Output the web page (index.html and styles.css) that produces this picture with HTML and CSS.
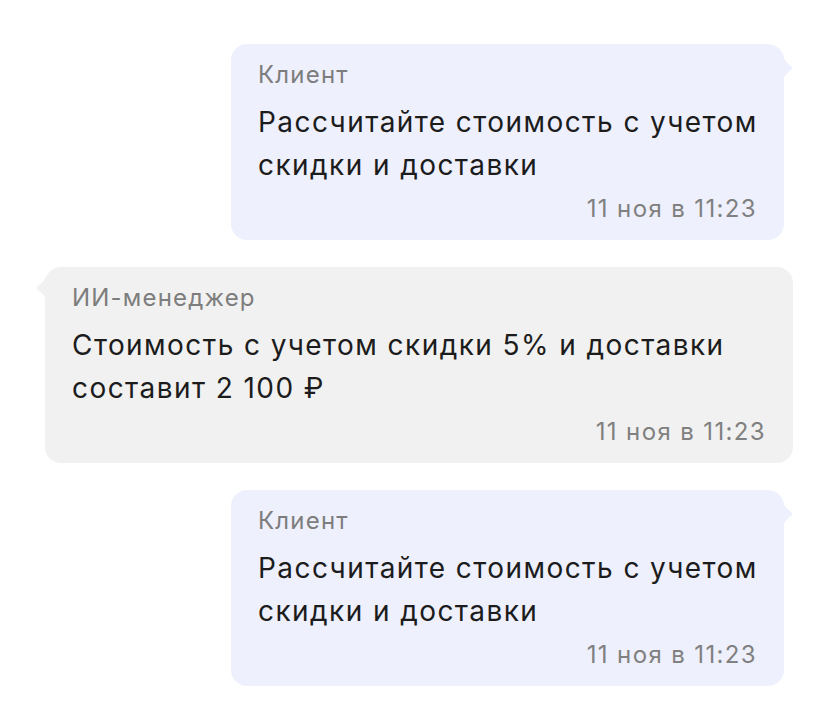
FILE: index.html
```html
<!DOCTYPE html>
<html lang="ru">
<head>
<meta charset="utf-8">
<link rel="stylesheet" href="styles.css">
</head>
<body>
<div class="chat">
  <div class="msg out">
    <div class="bubble">
      <svg class="tail" width="10" height="26" viewBox="0 0 10 26"><path d="M0 0 C1 5 4 8 8.5 11.5 Q10 13 8.5 14.5 C4 18 1 21 0 26 Z"/></svg>
      <div class="author">Клиент</div>
      <div class="text">Рассчитайте стоимость с учетом скидки и доставки</div>
      <div class="time">11 ноя в 11:23</div>
    </div>
  </div>
  <div class="msg in">
    <div class="bubble">
      <svg class="tail" width="10" height="26" viewBox="0 0 10 26"><path d="M10 0 C9 5 6 8 1.5 11.5 Q0 13 1.5 14.5 C6 18 9 21 10 26 Z"/></svg>
      <div class="author">ИИ-менеджер</div>
      <div class="text">Стоимость с учетом скидки 5% и доставки составит 2 100 ₽</div>
      <div class="time">11 ноя в 11:23</div>
    </div>
  </div>
  <div class="msg out">
    <div class="bubble">
      <svg class="tail" width="10" height="26" viewBox="0 0 10 26"><path d="M0 0 C1 5 4 8 8.5 11.5 Q10 13 8.5 14.5 C4 18 1 21 0 26 Z"/></svg>
      <div class="author">Клиент</div>
      <div class="text">Рассчитайте стоимость с учетом скидки и доставки</div>
      <div class="time">11 ноя в 11:23</div>
    </div>
  </div>
</div>
</body>
</html>
```

FILE: styles.css
```css
html, body {
  margin: 0;
  padding: 0;
  background: #ffffff;
}
body {
  font-family: Inter, "Noto Sans", sans-serif;
  color: #1c1c1c;
}
.chat {
  display: flex;
  flex-direction: column;
  gap: 27px;
  padding: 44px 35px 27px 36px;
}
.msg {
  display: flex;
}
.msg.out {
  justify-content: flex-end;
  padding-right: 9px;
}
.msg.in {
  justify-content: flex-start;
  padding-left: 9px;
}
.bubble {
  position: relative;
  box-sizing: border-box;
  border-radius: 16px;
  padding: 16px 27px 16px 27px;
}
.out .bubble {
  width: 553px;
  background: #eef0fd;
}
.in .bubble {
  width: 748px;
  background: #f1f1f1;
}
.tail {
  position: absolute;
  top: 11px;
}
.out .tail {
  right: -9px;
  fill: #eef0fd;
}
.in .tail {
  left: -9px;
  top: 8px;
  fill: #f1f1f1;
}
.author {
  font-size: 24px;
  line-height: 30px;
  letter-spacing: 0.05em;
  color: #7d7d7d;
}
.text {
  font-size: 28px;
  line-height: 43px;
  margin-top: 11px;
  margin-right: -8px;
  letter-spacing: 0.051em;
}
.time {
  font-size: 24px;
  line-height: 30px;
  letter-spacing: 0.057em;
  color: #808080;
  text-align: right;
  margin-top: 7px;
}
```
